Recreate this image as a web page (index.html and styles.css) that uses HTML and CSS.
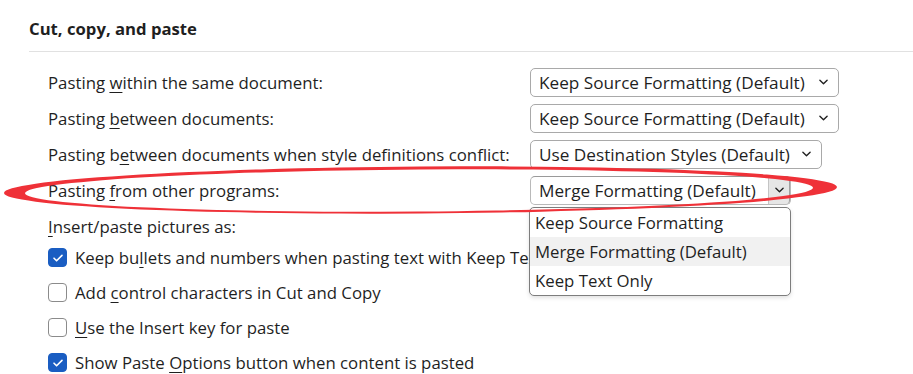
FILE: index.html
```html
<!DOCTYPE html>
<html lang="en">
<head>
    <meta charset="UTF-8">
    <title>Cut, copy, and paste</title>
    <link rel="stylesheet" href="styles.css">
</head>
<body>
    <div class="section">
        <h2 class="section-title">Cut, copy, and paste</h2>

        <div class="options">
            <div class="row">
                <span class="label">Pasting <u>w</u>ithin the same document:</span>
                <div class="select wide">
                    <span>Keep Source Formatting (Default)</span>
                    <svg class="chev" viewBox="0 0 10 6"><path d="M1 1l4 4 4-4"/></svg>
                </div>
            </div>
            <div class="row">
                <span class="label">Pasting <u>b</u>etween documents:</span>
                <div class="select wide">
                    <span>Keep Source Formatting (Default)</span>
                    <svg class="chev" viewBox="0 0 10 6"><path d="M1 1l4 4 4-4"/></svg>
                </div>
            </div>
            <div class="row">
                <span class="label">Pasting b<u>e</u>tween documents when style definitions conflict:</span>
                <div class="select mid">
                    <span>Use Destination Styles (Default)</span>
                    <svg class="chev" viewBox="0 0 10 6"><path d="M1 1l4 4 4-4"/></svg>
                </div>
            </div>
            <div class="row">
                <span class="label">Pasting <u>f</u>rom other programs:</span>
                <div class="select-wrap">
                    <div class="select open">
                        <span>Merge Formatting (Default)</span>
                        <span class="arrow-box">
                            <svg class="chev" viewBox="0 0 10 6"><path d="M1 1l4 4 4-4"/></svg>
                        </span>
                    </div>
                    <ul class="dropdown">
                        <li>Keep Source Formatting</li>
                        <li class="hover">Merge Formatting (Default)</li>
                        <li>Keep Text Only</li>
                    </ul>
                </div>
            </div>
            <div class="row short">
                <span class="label"><u>I</u>nsert/paste pictures as:</span>
            </div>

            <label class="check">
                <span class="box checked"><svg viewBox="0 0 12 10"><path d="M2 5.2l2.6 2.6L10 2.4"/></svg></span>
                <span class="check-text clipped">Keep bu<u>l</u>lets and numbers when pasting text with Keep Text Only option</span>
            </label>
            <label class="check">
                <span class="box"></span>
                <span class="check-text">Add <u>c</u>ontrol characters in Cut and Copy</span>
            </label>
            <label class="check">
                <span class="box"></span>
                <span class="check-text"><u>U</u>se the Insert key for paste</span>
            </label>
            <label class="check">
                <span class="box checked"><svg viewBox="0 0 12 10"><path d="M2 5.2l2.6 2.6L10 2.4"/></svg></span>
                <span class="check-text">Show Paste <u>O</u>ptions button when content is pasted</span>
            </label>
        </div>
    </div>

    <!-- hand drawn highlight over the "from other programs" row -->
    <svg class="marker" viewBox="0 0 913 374">
        <path fill-rule="evenodd" transform="rotate(-0.4 420 190)"
              d="M4 190a416.5 23.5 0 1 0 833 0a416.5 23.5 0 1 0 -833 0z
                 M25 190.5a394 21 0 1 0 788 0a394 21 0 1 0 -788 0z"/>
    </svg>
</body>
</html>
```

FILE: styles.css
```css
body {
    font-family: "Open Sans", "Noto Sans", sans-serif;
    font-size: 16.8px;
    color: #1f1f1f;
    margin: 0;
    background-color: #fff;
    width: 913px;
    height: 374px;
    overflow: hidden;
    position: relative;
}
.section {
    padding-left: 29px;
}
.section-title {
    font-size: 16.7px;
    font-weight: 700;
    margin: 0;
    height: 52px;
    box-sizing: border-box;
    border-bottom: 1px solid #e1e1e1;
    display: flex;
    align-items: flex-end;
    padding-bottom: 11px;
    line-height: 22px;
}
.options {
    padding-left: 19px;
    padding-top: 12px;
}
.row {
    display: flex;
    align-items: center;
    height: 36px;
}
.row.short {
    height: 32px;
    padding-top: 4px;
    box-sizing: border-box;
}
.label {
    width: 482px;
    flex-shrink: 0;
    white-space: nowrap;
}
u {
    text-decoration-thickness: 1px;
    text-underline-offset: 3px;
}
.select {
    box-sizing: border-box;
    height: 29px;
    border: 1px solid #a9a9a9;
    border-radius: 5px;
    display: flex;
    align-items: center;
    justify-content: space-between;
    padding: 0 10px 0 8px;
    background-color: #fff;
    white-space: nowrap;
    font-size: 17.2px;
}
.select.wide {
    width: 309px;
}
.select.mid {
    width: 292px;
}
.select-wrap {
    position: relative;
}
.select.open {
    width: 261px;
    padding-right: 0;
    border-color: #b9b9b9;
    border-top-color: #9a9a9a;
}
.arrow-box {
    width: 22px;
    height: 27px;
    box-sizing: border-box;
    border-left: 1px solid #c4c4c4;
    border-right: 1px solid #9f9f9f;
    background-color: #e6e6e6;
    display: flex;
    align-items: center;
    justify-content: center;
    border-radius: 0 4px 4px 0;
}
.chev {
    width: 9px;
    height: 6px;
    fill: none;
    stroke: #1f1f1f;
    stroke-width: 1.5;
    stroke-linecap: round;
    stroke-linejoin: round;
}
.dropdown {
    position: absolute;
    top: 31px;
    left: -1px;
    width: 262px;
    box-sizing: border-box;
    margin: 0;
    padding: 0;
    list-style: none;
    background-color: #fff;
    border: 1px solid #7d7d7d;
    border-radius: 5px;
    box-shadow: 0 2px 4px rgba(0, 0, 0, 0.12);
    z-index: 10;
}
.dropdown li {
    height: 29px;
    line-height: 29px;
    padding-left: 5px;
    white-space: nowrap;
}
.dropdown li.hover {
    background-color: #f1f1f1;
}
.check {
    display: flex;
    align-items: center;
    gap: 8px;
    height: 35px;
    white-space: nowrap;
}
.check-text.clipped {
    max-width: 454px;
    overflow: hidden;
}
.box {
    width: 19px;
    height: 19px;
    box-sizing: border-box;
    border: 1px solid #8b8b8b;
    border-radius: 4px;
    display: flex;
    align-items: center;
    justify-content: center;
    flex-shrink: 0;
    background-color: #fff;
}
.box.checked {
    background-color: #1a5dc2;
    border-color: #1a5dc2;
}
.box svg {
    width: 12px;
    height: 10px;
    fill: none;
    stroke: #fff;
    stroke-width: 1.6;
    stroke-linecap: round;
    stroke-linejoin: round;
}
.marker {
    position: absolute;
    left: 0;
    top: 0;
    width: 913px;
    height: 374px;
    fill: #ef3138;
    pointer-events: none;
    z-index: 20;
}
```
